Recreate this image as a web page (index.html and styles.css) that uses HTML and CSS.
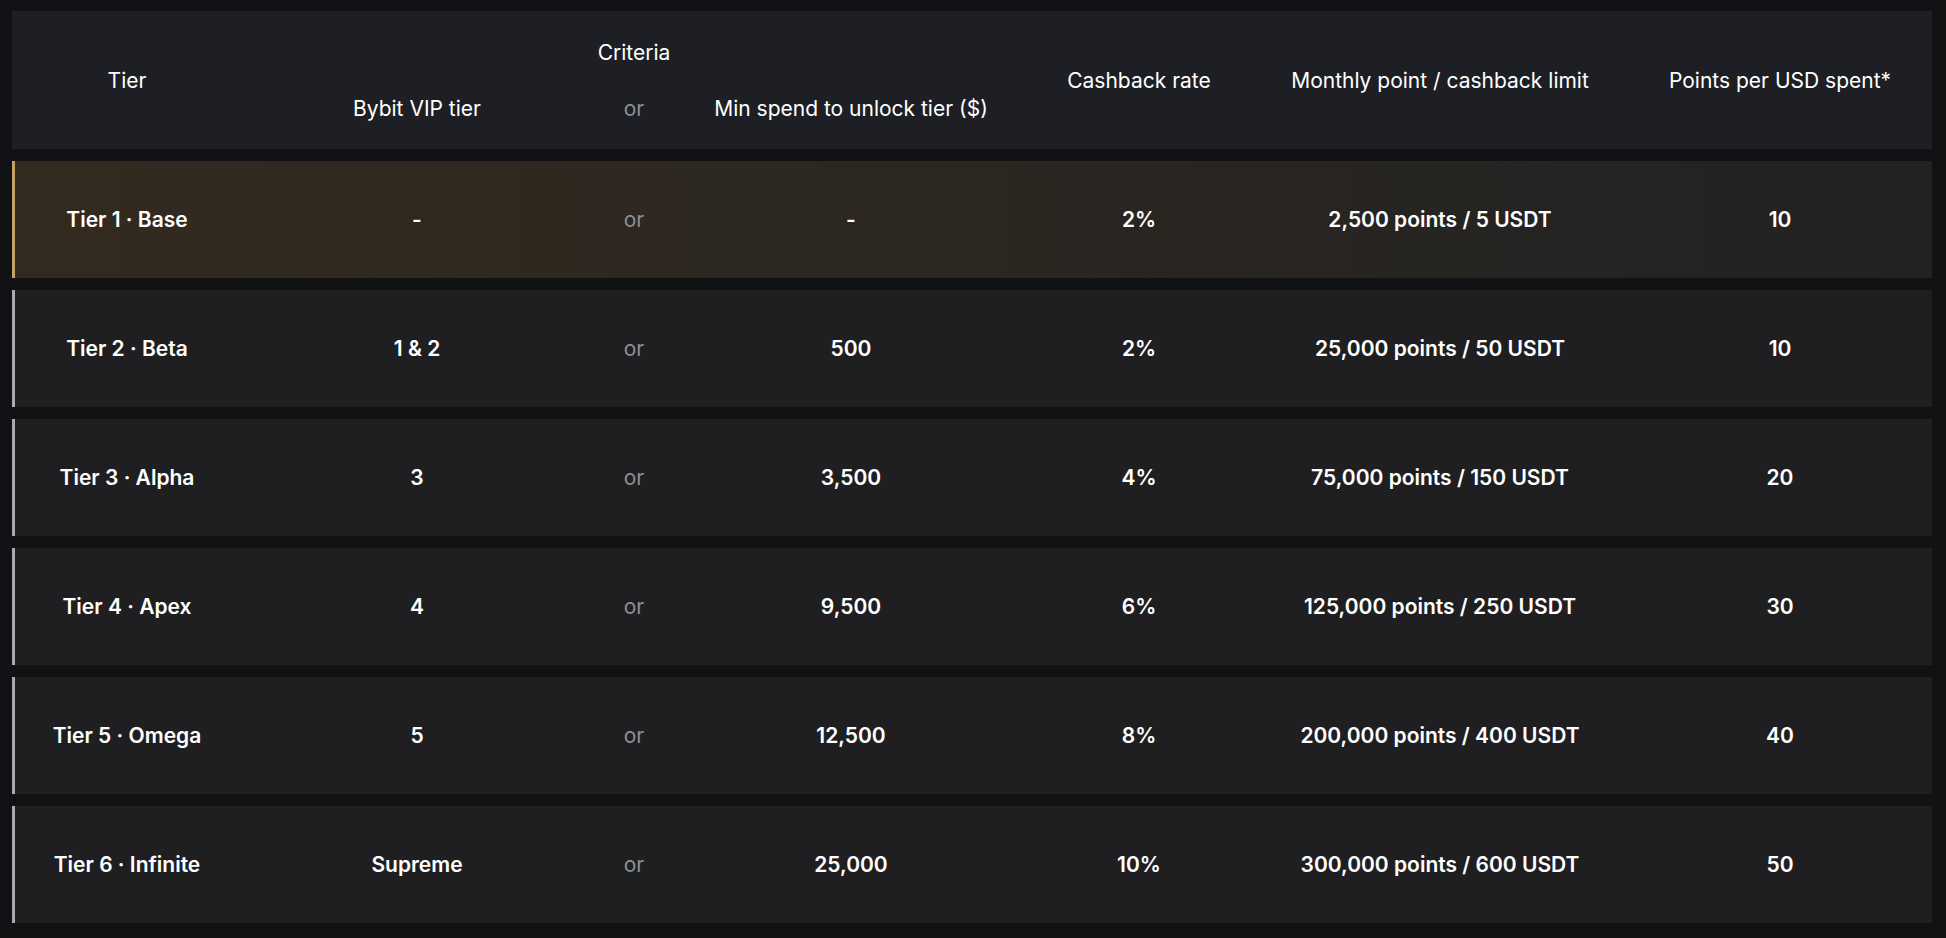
FILE: index.html
```html
<!DOCTYPE html>
<html lang="en">
<head>
<meta charset="utf-8">
<title>Tiers</title>
<link rel="stylesheet" href="styles.css">
</head>
<body>
<div class="page">
  <div class="head">
    <div class="h-tier span2">Tier</div>
    <div class="h-criteria">Criteria</div>
    <div class="h-vip">Bybit VIP tier</div>
    <div class="h-or or">or</div>
    <div class="h-min">Min spend to unlock tier ($)</div>
    <div class="h-cash span2">Cashback rate</div>
    <div class="h-limit span2">Monthly point / cashback limit</div>
    <div class="h-points span2">Points per USD spent*</div>
  </div>
  <div class="rows">
    <div class="row active">
      <div>Tier 1 · Base</div><div>-</div><div class="or">or</div><div>-</div><div>2%</div><div>2,500 points / 5 USDT</div><div>10</div>
    </div>
    <div class="row">
      <div>Tier 2 · Beta</div><div>1 &amp; 2</div><div class="or">or</div><div>500</div><div>2%</div><div>25,000 points / 50 USDT</div><div>10</div>
    </div>
    <div class="row">
      <div>Tier 3 · Alpha</div><div>3</div><div class="or">or</div><div>3,500</div><div>4%</div><div>75,000 points / 150 USDT</div><div>20</div>
    </div>
    <div class="row">
      <div>Tier 4 · Apex</div><div>4</div><div class="or">or</div><div>9,500</div><div>6%</div><div>125,000 points / 250 USDT</div><div>30</div>
    </div>
    <div class="row">
      <div>Tier 5 · Omega</div><div>5</div><div class="or">or</div><div>12,500</div><div>8%</div><div>200,000 points / 400 USDT</div><div>40</div>
    </div>
    <div class="row">
      <div>Tier 6 · Infinite</div><div>Supreme</div><div class="or">or</div><div>25,000</div><div>10%</div><div>300,000 points / 600 USDT</div><div>50</div>
    </div>
  </div>
</div>
</body>
</html>
```
FILE: styles.css
```css
* { box-sizing: border-box; }
html, body { margin: 0; padding: 0; background: #111214; }
body {
  font-family: Inter, "Noto Sans", "Liberation Sans", sans-serif;
  color: #ffffff;
}
.page {
  padding: 11px 14px 15px 12px;
  width: 1946px;
  height: 938px;
}
.head, .row {
  display: grid;
  grid-template-columns: 230px 350px 84px 350px 226px 376px 304px;
  text-align: center;
}
.head {
  background: #1e1f24;
  height: 138px;
  padding: 24px 0;
  grid-template-rows: 34px 34px;
  row-gap: 22px;
  font-size: 21px;
  font-weight: 400;
  align-items: center;
  margin-bottom: 12px;
}
.head > div { white-space: nowrap; }
.span2 { grid-row: 1 / 3; }
.h-tier { grid-column: 1; }
.h-criteria { grid-column: 2 / 5; grid-row: 1; }
.h-vip { grid-column: 2; grid-row: 2; }
.h-or { grid-column: 3; grid-row: 2; }
.h-min { grid-column: 4; grid-row: 2; }
.h-cash { grid-column: 5; }
.h-limit { grid-column: 6; }
.h-points { grid-column: 7; }
.rows {
  display: flex;
  flex-direction: column;
  gap: 12px;
}
.row {
  height: 117px;
  align-items: center;
  background: #1f1f21;
  box-shadow: inset 3px 0 0 #a9abb0;
  font-size: 21px;
  font-weight: 600;
  white-space: nowrap;
}
.row.active {
  background: linear-gradient(90deg, #332a1f 0%, #2c2720 40%, #222223 100%);
  box-shadow: inset 3px 0 0 #c5a163;
}
.or {
  color: #8e8f94;
  font-weight: 400;
}
```
